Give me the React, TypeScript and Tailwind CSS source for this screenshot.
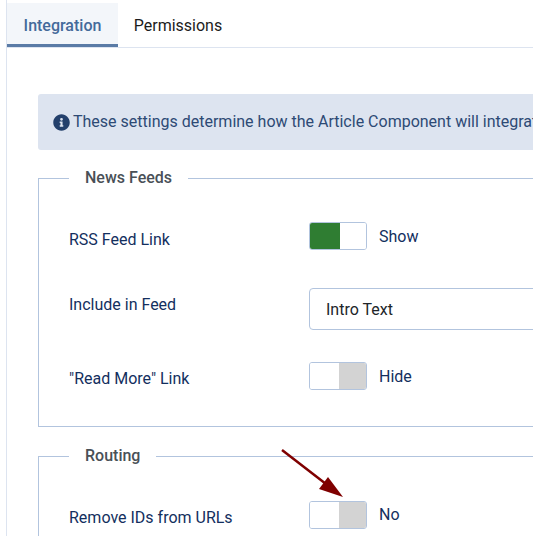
function Toggle({ on, label, textClass = "" }: { on: boolean; label: string; textClass?: string }) {
  return (
    <div className="flex items-center">
      <div className="flex h-[28px] w-[58px] overflow-hidden rounded-[3px] border border-[#b2c4de] bg-white">
        <div className={on ? "w-[30px] bg-[#2f7d32]" : "w-[29px] bg-white"} />
        <div className={on ? "flex-1 bg-white" : "flex-1 bg-[#d3d3d3]"} />
      </div>
      <span className={`ml-3 text-[#132f5e] ${textClass}`}>{label}</span>
    </div>
  )
}

function Row({ label, className, labelClass, children }: { label: string; className: string; labelClass: string; children: React.ReactNode }) {
  return (
    <div className={`flex items-center ${className}`}>
      <div className={`w-[240px] text-[#132f5e] ${labelClass}`}>{label}</div>
      {children}
    </div>
  )
}

export default function App() {
  return (
    <div className="relative h-[536px] w-[533px] overflow-hidden bg-white font-['Roboto',sans-serif] text-base">
      <div className="ml-[6px] h-full w-[1000px] border-l border-[#dde4f0] pt-[3px]">
        {/* Tabs */}
        <div className="flex h-[45px] border-b border-[#dde4f0]">
          <div className="flex h-[44px] w-[111px] items-center justify-center border-b-[3px] border-[#5a7ba6] bg-[#f3f6fa] pt-[5px] font-medium text-[#446a9a]">
            Integration
          </div>
          <div className="flex h-[44px] w-[120px] items-center justify-center pt-[1px] text-[#1c1c1c]">
            Permissions
          </div>
        </div>

        <div className="pl-[31px] pt-[46px]">
          {/* Alert */}
          <div className="flex h-[56px] w-[900px] items-center rounded-[3px] bg-[#dde4f0] pl-[15px] text-[#2d4a75]">
            <svg viewBox="0 0 512 512" className="mr-[3px] h-[17px] w-[17px] text-[#23406c]" fill="currentColor">
              <path d="M256 8C119 8 8 119 8 256s111 248 248 248 248-111 248-248S393 8 256 8zm0 110a42 42 0 1 1 0 84 42 42 0 0 1 0-84zm56 254c0 7-5 12-12 12h-88c-7 0-12-5-12-12v-24c0-7 5-12 12-12h12v-64h-12c-7 0-12-5-12-12v-24c0-7 5-12 12-12h64c7 0 12 5 12 12v100h12c7 0 12 5 12 12v24z" />
            </svg>
            <span>These settings determine how the Article Component will integrate with other extensions.</span>
          </div>

          {/* News Feeds */}
          <fieldset className="mt-[16px] h-[261px] w-[900px] border border-[#b2c4de] pl-[30px]">
            <legend className="px-[16px] font-medium text-[#495057]">News Feeds</legend>
            <Row label="RSS Feed Link" className="mt-[32px]" labelClass="translate-y-[4px]">
              <Toggle on label="Show" textClass="translate-y-[1px]" />
            </Row>
            <Row label="Include in Feed" className="mt-[38px]" labelClass="-translate-y-[4px]">
              <div className="flex h-[42px] w-[400px] items-center rounded-[4px] border border-[#b2c4de] pl-[16px] text-[#212529]">
                <span className="translate-y-[1px]">Intro Text</span>
              </div>
            </Row>
            <Row label={'"Read More" Link'} className="mt-[32px]" labelClass="translate-y-[3px]">
              <Toggle on={false} label="Hide" textClass="translate-y-[1px]" />
            </Row>
          </fieldset>

          {/* Routing */}
          <fieldset className="mt-[17px] h-[200px] w-[900px] border border-[#b2c4de] pl-[30px]">
            <legend className="px-[16px] font-medium text-[#495057]">Routing</legend>
            <Row label="Remove IDs from URLs" className="mt-[33px]" labelClass="translate-y-[3px]">
              <Toggle on={false} label="No" />
            </Row>
          </fieldset>
        </div>
      </div>

      {/* Annotation arrow */}
      <svg className="absolute left-[278px] top-[446px] h-[56px] w-[70px]" viewBox="0 0 70 56">
        <line x1="4" y1="4" x2="48" y2="38" stroke="#7f0000" strokeWidth="2.5" />
        <polygon points="65,51 41,43 50,31" fill="#7f0000" />
      </svg>
    </div>
  )
}
